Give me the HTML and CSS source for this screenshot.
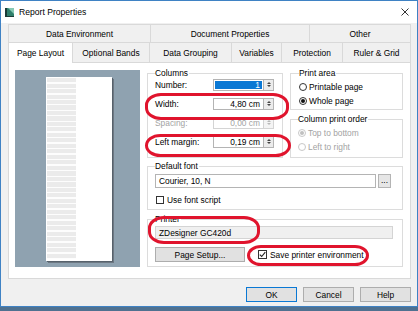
FILE: index.html
```html
<!DOCTYPE html>
<html lang="en">
<head>
    <meta charset="UTF-8">
    <title>Report Properties</title>
    <link rel="stylesheet" href="styles.css">
</head>
<body>
    <div class="window">
        <!-- title bar -->
        <div class="titlebar">
            <svg class="app-icon" width="9" height="9" viewBox="0 0 9 9">
                <rect x="0" y="0" width="9" height="9" fill="#2f7f6c"/>
                <polygon points="3,0 9,0 9,6" fill="#86c9b4"/>
                <rect x="0" y="0" width="2" height="9" fill="#1b3b37"/>
                <rect x="0" y="8" width="9" height="1" fill="#1b3b37"/>
            </svg>
            <span class="title">Report Properties</span>
            <svg class="close" width="8" height="8" viewBox="0 0 8 8">
                <path d="M0.5 0.5 L7.5 7.5 M7.5 0.5 L0.5 7.5" stroke="#333" stroke-width="1"/>
            </svg>
        </div>

        <div class="client">
            <!-- tabs -->
            <div class="tab-row row-back">
                <div class="tab w143">Data Environment</div>
                <div class="tab w159">Document Properties</div>
                <div class="tab w101">Other</div>
            </div>
            <div class="tab-row row-front">
                <div class="tab w65 active">Page Layout</div>
                <div class="tab w77">Optional Bands</div>
                <div class="tab w82">Data Grouping</div>
                <div class="tab w50">Variables</div>
                <div class="tab w61">Protection</div>
                <div class="tab w68">Ruler &amp; Grid</div>
            </div>

            <div class="panel">
                <!-- page preview -->
                <div class="preview">
                    <div class="page">
                        <div class="page-lines"></div>
                    </div>
                </div>

                <div class="settings">
                    <div class="top-row">
                        <fieldset class="group g-columns">
                            <legend>Columns</legend>
                            <div class="rows">
                                <div class="field-row">
                                    <span>Number:</span>
                                    <div class="spin">
                                        <div class="box selected"><span class="sel">1</span></div>
                                        <div class="spin-btn"><i class="up"></i><i class="down"></i></div>
                                    </div>
                                </div>
                                <div class="field-row">
                                    <span>Width:</span>
                                    <div class="spin">
                                        <div class="box">4,80 cm</div>
                                        <div class="spin-btn"><i class="up"></i><i class="down"></i></div>
                                    </div>
                                </div>
                                <div class="field-row disabled">
                                    <span>Spacing:</span>
                                    <div class="spin">
                                        <div class="box">0,00 cm</div>
                                        <div class="spin-btn"><i class="up"></i><i class="down"></i></div>
                                    </div>
                                </div>
                                <div class="field-row">
                                    <span>Left margin:</span>
                                    <div class="spin">
                                        <div class="box">0,19 cm</div>
                                        <div class="spin-btn"><i class="up"></i><i class="down"></i></div>
                                    </div>
                                </div>
                            </div>
                        </fieldset>

                        <div class="print-stack">
                            <fieldset class="group g-area">
                                <legend>Print area</legend>
                                <div class="radio-row first"><span class="radio"></span>Printable page</div>
                                <div class="radio-row"><span class="radio on"></span>Whole page</div>
                            </fieldset>
                            <fieldset class="group g-order">
                                <legend>Column print order</legend>
                                <div class="radio-row first disabled"><span class="radio on"></span>Top to bottom</div>
                                <div class="radio-row disabled"><span class="radio"></span>Left to right</div>
                            </fieldset>
                        </div>
                    </div>

                    <fieldset class="group g-font">
                        <legend>Default font</legend>
                        <div class="font-row">
                            <div class="text-input font-input">Courier, 10, N</div>
                            <div class="dots-btn">...</div>
                        </div>
                        <div class="check-row"><span class="check"></span>Use font script</div>
                    </fieldset>

                    <fieldset class="group g-printer">
                        <legend>Printer</legend>
                        <div class="text-input printer-input">ZDesigner GC420d</div>
                        <div class="printer-row">
                            <div class="btn setup-btn">Page Setup...</div>
                            <div class="check-row"><span class="check on">
                                <svg width="7" height="7" viewBox="0 0 7 7"><path d="M0.8 3.6 L2.7 5.5 L6.3 1.2" fill="none" stroke="#222" stroke-width="1.1"/></svg>
                            </span>Save printer environment</div>
                        </div>
                    </fieldset>
                </div>
            </div>

            <div class="buttons">
                <div class="btn default">OK</div>
                <div class="btn">Cancel</div>
                <div class="btn">Help</div>
            </div>
        </div>

        <!-- red marker rings drawn over the dialog -->
        <div class="mark mark-width"></div>
        <div class="mark mark-margin"></div>
        <div class="mark mark-printer"></div>
        <div class="mark mark-save"></div>
    </div>
</body>
</html>
```

FILE: styles.css
```css
body {
    margin: 0;
    background: #4f7190;
    font-family: "Liberation Sans", Arial, sans-serif;
    font-size: 8.4px;
    color: #000;
}
.window {
    position: relative;
    width: 418px;
    height: 307px;
    box-sizing: border-box;
    border: 1px solid #3f82c4;
    background: #f0f0f0;
    display: flex;
    flex-direction: column;
}
.titlebar {
    height: 22px;
    background: #fff;
    display: flex;
    align-items: center;
    padding: 0 8px 0 4px;
}
.app-icon {
    margin-right: 5px;
}
.title {
    flex: 1;
    font-size: 8.6px;
}
.client {
    flex: 1;
    padding: 1px 6px 0 7px;
    display: flex;
    flex-direction: column;
}
/* tabs */
.tab-row {
    display: flex;
}
.row-back {
    height: 18px;
}
.row-front {
    height: 20px;
}
.tab {
    box-sizing: border-box;
    border: 1px solid #d9d9d9;
    border-bottom: none;
    border-left: none;
    display: flex;
    align-items: center;
    justify-content: center;
    background: #f0f0f0;
}
.tab:first-child {
    border-left: 1px solid #d9d9d9;
}
.tab.active {
    background: #fff;
    height: 21px;
    position: relative;
    z-index: 1;
}
.w143 { width: 143px; }
.w159 { width: 159px; }
.w101 { width: 101px; }
.w65 { width: 65px; }
.w77 { width: 77px; }
.w82 { width: 82px; }
.w50 { width: 50px; }
.w61 { width: 61px; }
.w68 { width: 68px; }
/* main panel */
.panel {
    height: 217px;
    box-sizing: border-box;
    background: #fff;
    border: 1px solid #d9d9d9;
    padding: 5px 7px 11px 6px;
    display: grid;
    grid-template-columns: 125px 256px;
    column-gap: 7px;
}
.preview {
    margin-top: 2px;
    height: 197px;
    background: #8fa2b0;
    display: flex;
    justify-content: center;
    padding-left: 2px;
    box-sizing: border-box;
}
.page {
    margin-top: 7px;
    width: 66px;
    height: 184px;
    background: #fff;
    box-shadow: 1px 1px 0 #56616b, 2px 2px 0 #6d7883;
    padding: 1px 0 2px 1px;
    box-sizing: border-box;
}
.page-lines {
    width: 29px;
    height: 100%;
    background: repeating-linear-gradient(#ebebeb 0 4px, #fdfdfd 4px 5.5px);
}
.settings {
    display: flex;
    flex-direction: column;
}
.top-row {
    display: flex;
    gap: 7px;
}
.group {
    margin: 0;
    min-width: 0;
    border: 1px solid #dcdcdc;
    padding: 0 8px 6px 7px;
}
.group legend {
    padding: 0 1px 0 0;
    line-height: 10px;
}
.g-columns {
    width: 136px;
    box-sizing: border-box;
}
.rows {
    margin-top: -3px;
}
.field-row {
    height: 19px;
    display: flex;
    align-items: center;
    justify-content: space-between;
}
.spin {
    display: flex;
}
.box {
    width: 50px;
    height: 12px;
    box-sizing: border-box;
    border: 1px solid #b4b4b4;
    border-right: none;
    background: #fff;
    text-align: right;
    padding: 0 3px;
    line-height: 10px;
}
.box.selected {
    padding: 1px;
}
.sel {
    display: block;
    height: 8px;
    line-height: 8px;
    background: #0a78d4;
    color: #fff;
    padding-right: 2px;
}
.spin-btn {
    width: 11px;
    height: 12px;
    box-sizing: border-box;
    border: 1px solid #b4b4b4;
    background: #ececec;
    display: flex;
    flex-direction: column;
    align-items: center;
    justify-content: center;
    gap: 1px;
}
.spin-btn i {
    width: 0;
    height: 0;
    border-left: 2px solid transparent;
    border-right: 2px solid transparent;
}
.spin-btn .up {
    border-bottom: 2px solid #444;
}
.spin-btn .down {
    border-top: 2px solid #444;
}
.disabled {
    color: #a3a3a3;
}
.disabled .box {
    border-color: #d4d4d4;
    color: #a3a3a3;
}
.disabled .spin-btn {
    border-color: #d4d4d4;
    background: #f4f4f4;
}
.disabled .spin-btn .up {
    border-bottom-color: #b8b8b8;
}
.disabled .spin-btn .down {
    border-top-color: #b8b8b8;
}
/* print area */
.print-stack {
    width: 113px;
    display: flex;
    flex-direction: column;
    gap: 4px;
}
.g-area {
    padding: 0 6px 1px 8px;
}
.g-order {
    padding: 0 6px 3px 7px;
}
.radio-row {
    height: 14px;
    display: flex;
    align-items: center;
    gap: 2px;
}
.radio-row.first {
    margin-top: 2px;
}
.radio {
    width: 8px;
    height: 8px;
    box-sizing: border-box;
    border: 1px solid #333;
    border-radius: 50%;
    background: #fff;
    display: flex;
    align-items: center;
    justify-content: center;
}
.radio.on::after {
    content: "";
    width: 4px;
    height: 4px;
    border-radius: 50%;
    background: #111;
}
.disabled .radio {
    border-color: #c8c8c8;
}
.disabled .radio.on::after {
    background: #c0c0c0;
}
/* default font */
.g-font {
    margin-top: 3px;
    padding: 0 11px 2px 7px;
}
.font-row {
    margin-top: 3px;
    height: 14px;
    display: flex;
    gap: 2px;
}
.text-input {
    box-sizing: border-box;
    border: 1px solid #b4b4b4;
    background: #fff;
    padding: 0 3px;
    display: flex;
    align-items: center;
}
.font-input {
    flex: 1;
}
.dots-btn {
    width: 13px;
    box-sizing: border-box;
    border: 1px solid #b4b4b4;
    background: #e6e6e6;
    text-align: center;
    line-height: 11px;
}
.check-row {
    display: flex;
    align-items: center;
    gap: 3px;
}
.g-font .check-row {
    margin-top: 4px;
    height: 15px;
    padding-left: 1px;
}
.check {
    width: 8px;
    height: 8px;
    box-sizing: border-box;
    border: 1px solid #333;
    background: #fff;
    display: flex;
    align-items: center;
    justify-content: center;
}
.check.on {
    width: 9px;
    height: 9px;
}
/* printer */
.g-printer {
    margin-top: 4px;
    padding: 0 9px 4px 7px;
}
.printer-input {
    margin-top: 2px;
    height: 13px;
    background: #f0f0f0;
    border-color: #d4d4d4;
}
.printer-row {
    margin-top: 8px;
    display: flex;
    align-items: center;
    gap: 13px;
}
.btn {
    box-sizing: border-box;
    height: 15px;
    border: 1px solid #adadad;
    background: #e1e1e1;
    display: flex;
    align-items: center;
    justify-content: center;
}
.setup-btn {
    width: 90px;
}
/* dialog buttons */
.buttons {
    margin-top: 8px;
    display: flex;
    justify-content: flex-end;
    gap: 6px;
}
.buttons .btn {
    width: 51px;
}
.buttons .default {
    border-color: #0a78d4;
}
/* red rings */
.mark {
    position: absolute;
    box-sizing: border-box;
    border: 3px solid #e0142d;
    border-radius: 16px / 12px;
}
.mark-width {
    left: 144px;
    top: 92px;
    width: 144px;
    height: 27px;
}
.mark-margin {
    left: 144px;
    top: 133px;
    width: 146px;
    height: 23px;
}
.mark-printer {
    left: 147px;
    top: 215px;
    width: 112px;
    height: 28px;
}
.mark-save {
    left: 246px;
    top: 244px;
    width: 122px;
    height: 21px;
}
```
